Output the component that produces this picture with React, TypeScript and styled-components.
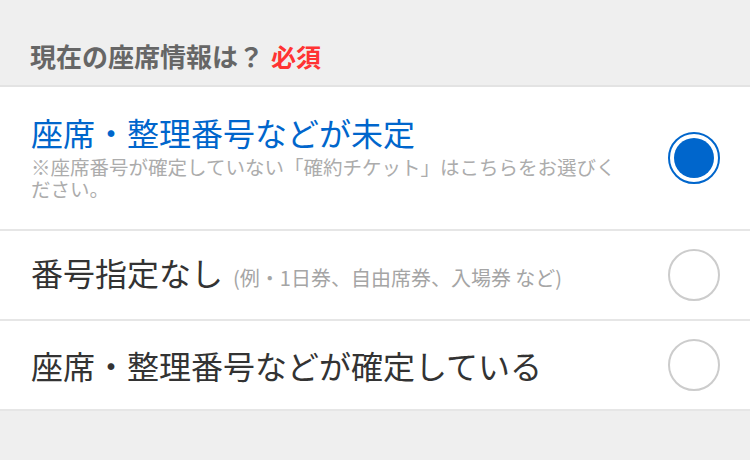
import React, { useState } from 'react'
import styled, { createGlobalStyle } from 'styled-components'

const GlobalStyle = createGlobalStyle`
    html, body {
        margin: 0;
        padding: 0;
        background: #efefef;
        font-family: "Noto Sans CJK JP", "Noto Sans", sans-serif;
    }
`

type Option = {
    id: string
    label: string
    note?: string
    inline?: string
}

const OPTIONS: Option[] = [
    {
        id: 'undecided',
        label: '座席・整理番号などが未定',
        note: '※座席番号が確定していない「確約チケット」はこちらをお選びください。',
    },
    {
        id: 'none',
        label: '番号指定なし',
        inline: '(例・1日券、自由席券、入場券 など)',
    },
    {
        id: 'fixed',
        label: '座席・整理番号などが確定している',
    },
]

const App: React.FC = () => {
    const [selected, setSelected] = useState<string>('undecided')

    return (
        <Page>
            <GlobalStyle />
            <Header>
                現在の座席情報は？<Required>必須</Required>
            </Header>
            <List>
                {OPTIONS.map((o) => (
                    <Row key={o.id} $tall={!!o.note} onClick={() => setSelected(o.id)}>
                        <Texts $tall={!!o.note}>
                            <Label $active={selected === o.id}>
                                {o.label}
                                {o.inline && <Inline>{o.inline}</Inline>}
                            </Label>
                            {o.note && <Note>{o.note}</Note>}
                        </Texts>
                        <Radio $checked={selected === o.id} />
                    </Row>
                ))}
            </List>
        </Page>
    )
}

export default App

const Page = styled.div`
    width: 750px;
    height: 460px;
    background: #efefef;
    overflow: hidden;
`

const Header = styled.div`
    height: 85px;
    box-sizing: border-box;
    padding: 40px 31px 0 30px;
    font-size: 26px;
    line-height: 32px;
    font-weight: 700;
    color: #666;
`

const Required = styled.span`
    color: #f33;
    margin-left: 7px;
    font-size: 25px;
`

const List = styled.div`
    background: #fff;
    border-top: 2px solid #e3e3e3;
`

const Row = styled.div<{ $tall: boolean }>`
    display: flex;
    align-items: center;
    justify-content: space-between;
    box-sizing: border-box;
    height: ${(p) => (p.$tall ? '144px' : '90px')};
    padding: 0 30px 0 31px;
    border-bottom: 2px solid #e6e6e6;
    cursor: pointer;
`

const Texts = styled.div<{ $tall: boolean }>`
    display: flex;
    flex-direction: column;
    width: 600px;
    margin-top: ${(p) => (p.$tall ? '-4px' : '0')};
`

const Label = styled.div<{ $active: boolean }>`
    font-size: 32px;
    line-height: 38px;
    color: ${(p) => (p.$active ? '#0066cc' : '#333')};
    white-space: nowrap;
`

const Inline = styled.span`
    font-size: 20px;
    color: #a5a5a5;
    margin-left: 10px;
`

const Note = styled.div`
    margin-top: 5px;
    font-size: 19.5px;
    line-height: 22px;
    color: #acacac;
`

const Radio = styled.span<{ $checked: boolean }>`
    flex: none;
    position: relative;
    width: 52px;
    height: 52px;
    box-sizing: border-box;
    border-radius: 50%;
    border: 2px solid ${(p) => (p.$checked ? '#0066cc' : '#cccccc')};
    background: #fff;

    &::after {
        content: '';
        display: ${(p) => (p.$checked ? 'block' : 'none')};
        position: absolute;
        inset: 4px;
        border-radius: 50%;
        background: #0066cc;
    }
`
